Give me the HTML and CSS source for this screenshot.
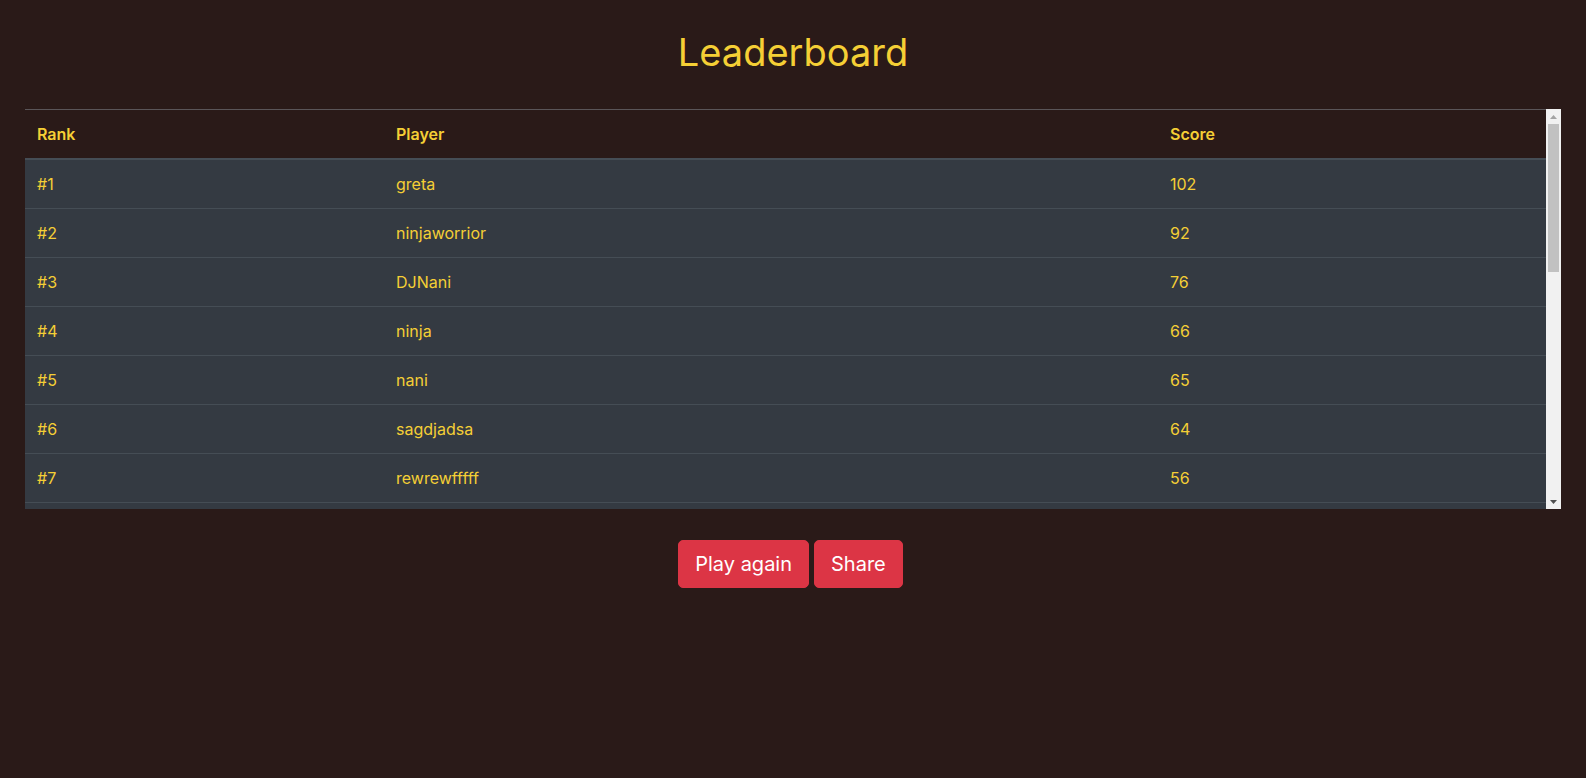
FILE: index.html
```html
<!DOCTYPE html>
<html lang="en">
<head>
<meta charset="utf-8">
<title>Leaderboard</title>
<link rel="stylesheet" href="styles.css">
</head>
<body>
<main class="page">
  <h1 class="title">Leaderboard</h1>
  <div class="board">
    <div class="viewport">
      <table class="table">
        <thead>
          <tr><th class="col-rank">Rank</th><th class="col-player">Player</th><th>Score</th></tr>
        </thead>
        <tbody>
          <tr><td>#1</td><td>greta</td><td>102</td></tr>
          <tr><td>#2</td><td>ninjaworrior</td><td>92</td></tr>
          <tr><td>#3</td><td>DJNani</td><td>76</td></tr>
          <tr><td>#4</td><td>ninja</td><td>66</td></tr>
          <tr><td>#5</td><td>nani</td><td>65</td></tr>
          <tr><td>#6</td><td>sagdjadsa</td><td>64</td></tr>
          <tr><td>#7</td><td>rewrewfffff</td><td>56</td></tr>
          <tr><td>#8</td><td>tomas</td><td>54</td></tr>
        </tbody>
      </table>
    </div>
    <div class="scrollbar" aria-hidden="true">
      <div class="sb-btn">
        <svg width="7" height="4" viewBox="0 0 7 4"><polygon points="0,4 7,4 3.5,0" fill="#a3a3a3"/></svg>
      </div>
      <div class="sb-track"><div class="sb-thumb"></div></div>
      <div class="sb-btn">
        <svg width="7" height="4" viewBox="0 0 7 4"><polygon points="0,0 7,0 3.5,4" fill="#505050"/></svg>
      </div>
    </div>
  </div>
  <div class="actions">
    <button class="btn">Play again</button>
    <button class="btn">Share</button>
  </div>
</main>
</body>
</html>
```
FILE: styles.css
```css
* { box-sizing: border-box; }
html, body {
  margin: 0;
  padding: 0;
  background: #2a1a18;
}
body {
  font-family: "Inter", "Noto Sans", "Liberation Sans", sans-serif;
  color: #f5cf35;
  font-size: 16px;
  line-height: 1.5;
}
.page {
  padding: 28px 25px 0;
}
.title {
  margin: 0 0 33px;
  text-align: center;
  font-weight: 400;
  font-size: 38px;
  line-height: 48px;
  color: #f5cf35;
}
.board {
  display: flex;
  height: 400px;
}
.viewport {
  flex: 1;
  min-width: 0;
  overflow: hidden;
}
.scrollbar {
  width: 15px;
  flex: none;
  display: flex;
  flex-direction: column;
  background: #f1f1f1;
}
.sb-btn {
  height: 15px;
  flex: none;
  display: flex;
  align-items: center;
  justify-content: center;
}
.sb-btn svg { display: block; }
.sb-track {
  flex: 1;
  padding: 0 2px;
}
.sb-thumb {
  height: 148px;
  background: #c1c1c1;
}
.table {
  width: 100%;
  border-collapse: collapse;
}
.table th, .table td {
  text-align: left;
  padding: 12px;
  vertical-align: top;
}
.table th {
  font-weight: 600;
  border-top: 1px solid #5a5558;
  border-bottom: 2px solid #454d55;
}
.col-rank { width: 359px; }
.col-player { width: 774px; }
.table tbody tr {
  background: #343a42;
}
.table td {
  border-top: 1px solid #454d55;
}
.table tbody tr:first-child td {
  border-top: 0;
}
.actions {
  margin-top: 31px;
  padding-right: 5px;
  display: flex;
  justify-content: center;
  gap: 5px;
}
.btn {
  font-family: inherit;
  font-size: 20px;
  line-height: 30px;
  padding: 8px 16px;
  border: 1px solid #dc3545;
  border-radius: 5px;
  background: #dc3545;
  color: #fff;
  cursor: pointer;
}
```
